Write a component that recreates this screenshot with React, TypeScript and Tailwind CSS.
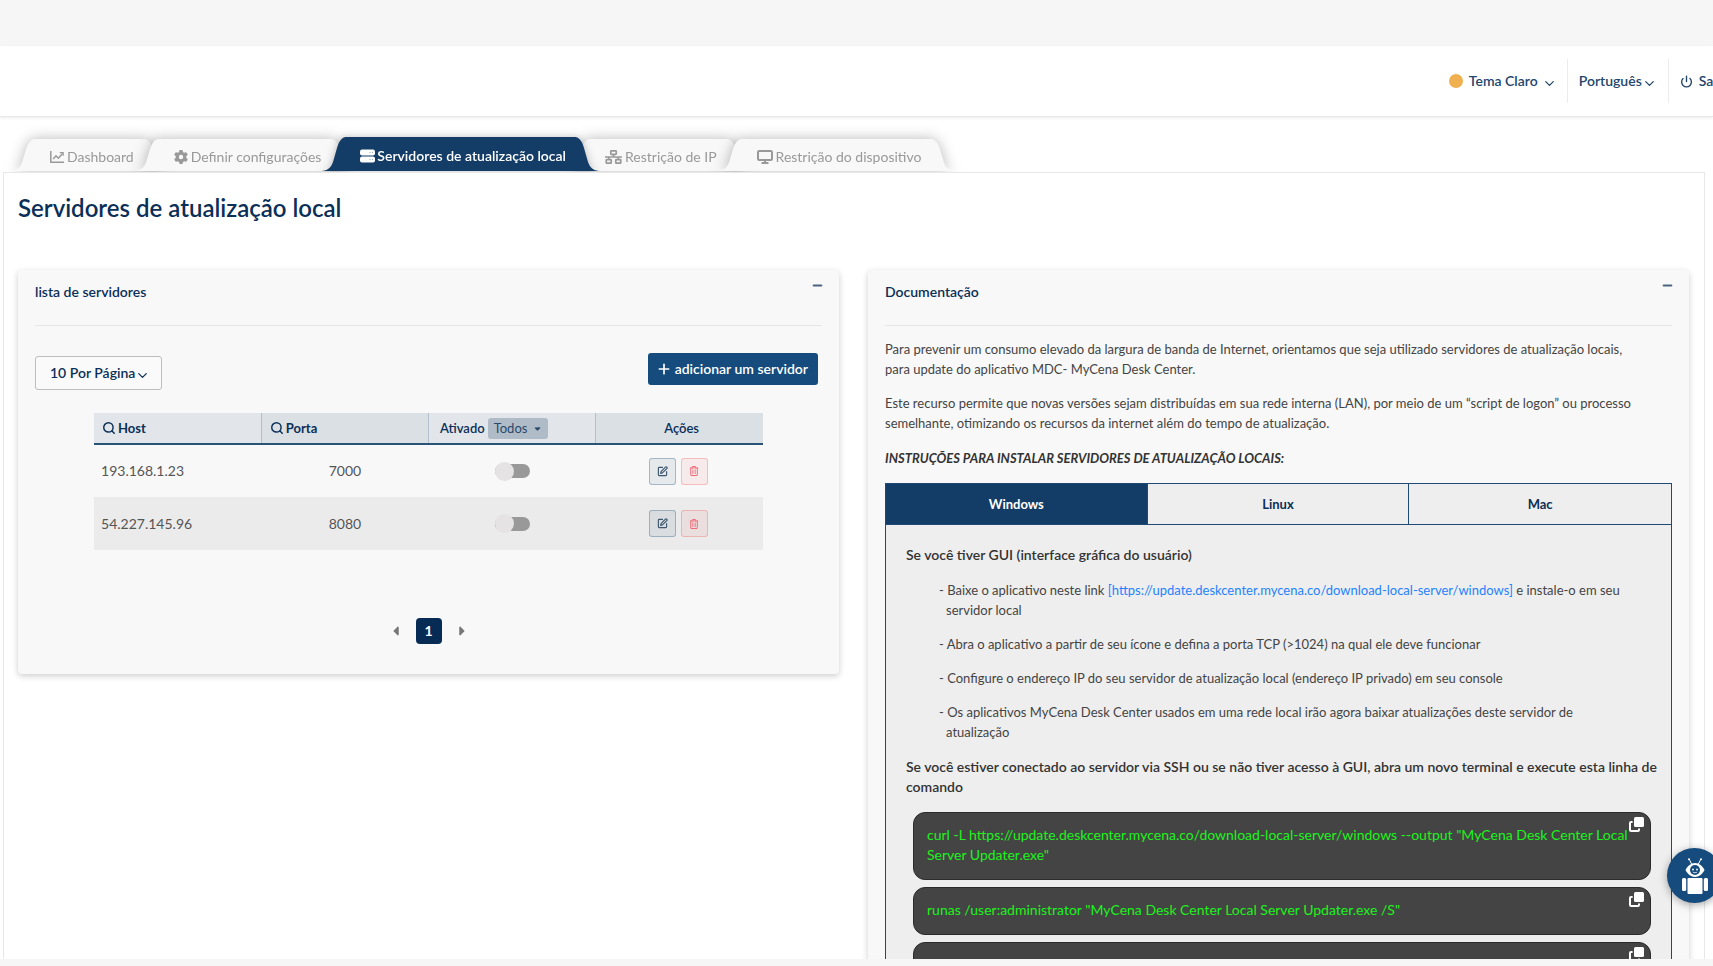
import type { ReactNode } from "react";
import { ChevronDown, Minus, Plus, Power, Search, SquarePen } from "lucide-react";
import { FaCaretDown, FaCaretLeft, FaCaretRight, FaGear, FaRegTrashCan } from "react-icons/fa6";

const servers = [
  { host: "193.168.1.23", port: "7000" },
  { host: "54.227.145.96", port: "8080" },
];

const commands = [
  'curl -L https://update.deskcenter.mycena.co/download-local-server/windows --output "MyCena Desk Center Local Server Updater.exe"',
  'runas /user:administrator "MyCena Desk Center Local Server Updater.exe /S"',
  'netstat -an | find "LISTENING"',
];

function ChartIcon() {
  return (
    <svg width="14" height="12" viewBox="0 0 14 12" fill="none" stroke="currentColor" strokeWidth="1.5">
      <path d="M.8 0v11.2H14" />
      <path d="M3.2 8 6 4.8l2.4 2.4 4.2-4.8" />
      <path d="M9.8 1.6h3.4v3.2" strokeWidth="1.2" />
    </svg>
  );
}

function ServerIcon() {
  return (
    <svg width="15" height="14" viewBox="0 0 15 14">
      <rect width="15" height="6" y="0.5" rx="2" fill="#fff" />
      <rect width="15" height="6" y="7.5" rx="2" fill="#fff" />
      <path d="M9.5 3.5h1M12 3.5h1M9.5 10.5h1M12 10.5h1" stroke="#8fa6bd" />
    </svg>
  );
}

function NetworkIcon() {
  return (
    <svg width="17" height="14" viewBox="0 0 17 14" fill="none" stroke="currentColor" strokeWidth="1.7">
      <rect x="5.75" y=".85" width="5.5" height="3.6" rx=".6" />
      <rect x="1.25" y="9.6" width="5" height="3.6" rx=".6" />
      <rect x="10.75" y="9.6" width="5" height="3.6" rx=".6" />
      <path d="M8.5 4.5V7M0 7h17M3.75 7v2.5M13.25 7v2.5" />
    </svg>
  );
}

function DisplayIcon() {
  return (
    <svg width="16" height="14" viewBox="0 0 16 14" fill="none" stroke="currentColor" strokeWidth="2">
      <rect x="1" y="1" width="14" height="9" rx="1.2" />
      <path d="M8 10v3M4.5 13h7" strokeWidth="2" />
    </svg>
  );
}

function CopyIcon() {
  return (
    <svg width="15" height="15" viewBox="0 0 15 15">
      <rect x="5" y="0" width="10" height="10" rx="1.5" fill="#fff" />
      <path d="M3.6 5H2a1 1 0 0 0-1 1v7a1 1 0 0 0 1 1h7a1 1 0 0 0 1-1v-1.6" fill="none" stroke="#fff" strokeWidth="2" />
    </svg>
  );
}

function RobotIcon() {
  return (
    <svg width="26" height="36" viewBox="0 0 26 36" fill="#fff">
      <path d="M7.2 1.2 9.6 6M18.8 1.2 16.4 6" stroke="#fff" strokeWidth="1" />
      <circle cx="7" cy="1.2" r="1" />
      <circle cx="19" cy="1.2" r="1" />
      <path d="M3.5 12C5.5 8 9 5 13 5s7.5 3 9.5 7c-2 4-5.5 7-9.5 7s-7.5-3-9.5-7Z" />
      <circle cx="13" cy="12" r="5" fill="#154c7d" />
      <circle cx="11" cy="11.5" r=".9" />
      <circle cx="15" cy="11.5" r=".9" />
      <path d="M10.8 14c1.3 1 3.1 1 4.400 0" fill="none" stroke="#fff" strokeWidth=".8" />
      <rect x="5.5" y="20" width="15" height="16" rx="1" />
      <rect x="0" y="20" width="4.2" height="13" rx="1.5" />
      <rect x="21.8" y="20" width="4.2" height="13" rx="1.5" />
    </svg>
  );
}

function TabCap({ flip }: { flip?: boolean }) {
  return (
    <svg width="24" height="34" viewBox="0 0 24 34" preserveAspectRatio="none" className={flip ? "h-full w-6 -scale-x-100" : "h-full w-6"}>
      <path d="M0 34C7 33 9 30 11 25L15 11C17 4 20 0 24 0v34Z" fill="currentColor" />
    </svg>
  );
}

type TabProps = { icon: ReactNode; label: string; active?: boolean };

function NavTab({ icon, label, active }: TabProps) {
  return (
    <button
      role="tab"
      aria-selected={!!active}
      className={
        active
          ? "relative z-10 -ml-[33px] flex h-[34px] text-[#133c66] drop-shadow-[0_0_4px_rgba(0,0,0,0.25)] first:ml-0"
          : "-ml-[33px] flex h-8 text-[#f8f8f8] drop-shadow-[0_0_7px_rgba(0,0,0,0.28)] first:ml-0"
      }
    >
      <TabCap />
      <span
        className={
          active
            ? "-mx-px flex h-full items-center gap-0.5 bg-[#133c66] pt-1 pr-2.5 pl-[15px] font-semibold whitespace-nowrap text-white"
            : "-mx-px flex h-full items-center gap-[3px] bg-[#f8f8f8] pt-[3px] pr-[11px] pl-4 whitespace-nowrap text-[#999]"
        }
      >
        {icon}
        {label}
      </span>
      <TabCap flip />
    </button>
  );
}

function Card({ title, children }: { title: string; children: ReactNode }) {
  return (
    <section className="rounded bg-[#f8f8f8] px-[17px] shadow-[0_2px_6px_rgba(0,0,0,0.2)]">
      <div className="flex h-14 justify-between border-b border-[#e6e6e6] pt-3">
        <h2 className="leading-5 font-semibold text-[#0b2f57]">{title}</h2>
        <button aria-label="Recolher" className="flex h-1.5 items-center text-[#4a647f]">
          <Minus size={13} strokeWidth={4} className="-mr-0.5" />
        </button>
      </div>
      {children}
    </section>
  );
}

function ServerTable() {
  return (
    <table className="mx-auto mt-[23px] w-[85%] table-fixed border-collapse">
      <thead>
        <tr className="h-[31px] border-b-2 border-[#2a5378] text-[13px] text-[#0b2f57]">
          <th className="border-r border-[#b3bfca] bg-[#e2e6ea] px-2 text-left font-bold">
            <span className="flex items-center gap-0.5">
              <Search size={14} strokeWidth={2.5} />
              Host
            </span>
          </th>
          <th className="border-r border-[#b3bfca] bg-[#dbe0e5] px-2 text-left font-bold">
            <span className="flex items-center gap-0.5">
              <Search size={14} strokeWidth={2.5} />
              Porta
            </span>
          </th>
          <th className="border-r border-[#b3bfca] bg-[#e2e6ea] px-[11px] text-left font-semibold">
            <span className="flex items-center gap-[3px]">
              Ativado
              <button className="flex h-[21px] items-center gap-1.5 rounded-[3px] bg-[#afbbc7] px-1.5 font-normal text-[#29486b]">
                Todos
                <FaCaretDown size={9} />
              </button>
            </span>
          </th>
          <th className="bg-[#dbe0e5] pl-1 font-semibold">Ações</th>
        </tr>
      </thead>
      <tbody className="text-[#555]">
        {servers.map((server) => (
          <tr key={server.host} className="h-[53px] even:bg-[#ebebeb]">
            <td className="px-[7px]">{server.host}</td>
            <td className="text-center">{server.port}</td>
            <td>
              <label className="mx-auto flex h-5 w-[35px] items-center">
                <input type="checkbox" role="switch" aria-label={`Ativar ${server.host}`} className="peer sr-only" />
                <span className="flex h-3.5 w-[35px] items-center rounded-full bg-[#999]">
                  <span className="size-[19px] rounded-full bg-[#e5e3e4]" />
                </span>
              </label>
            </td>
            <td>
              <div className="flex justify-center gap-[5px] pr-0.5">
                <button aria-label="Editar" className="flex size-[27px] items-center justify-center rounded-[3px] border border-[#12406a]/30 bg-[#12406a]/8 text-[#3e566e]">
                  <SquarePen size={11} strokeWidth={2.5} />
                </button>
                <button aria-label="Excluir" className="flex size-[27px] items-center justify-center rounded-[3px] border border-[#f05050]/30 bg-[#f05050]/8 text-[#ee6a78]">
                  <FaRegTrashCan size={10} />
                </button>
              </div>
            </td>
          </tr>
        ))}
      </tbody>
    </table>
  );
}

function Documentation() {
  return (
    <div className="pt-[13px] leading-5 text-[#444]">
      <p className="mb-[14px] text-[13px] leading-5">
        Para prevenir um consumo elevado da largura de banda de Internet, orientamos que seja utilizado servidores de atualização locais,
        <br />
        para update do aplicativo MDC- MyCena Desk Center.
      </p>
      <p className="mb-[15px] text-[13px] leading-5">
        Este recurso permite que novas versões sejam distribuídas em sua rede interna (LAN), por meio de um “script de logon” ou processo
        <br />
        semelhante, otimizando os recursos da internet além do tempo de atualização.
      </p>
      <p className="mb-[15px] text-[13px] leading-5 font-bold text-[#333] italic">INSTRUÇÕES PARA INSTALAR SERVIDORES DE ATUALIZAÇÃO LOCAIS:</p>
      <div className="border border-[#1f4a73] bg-[#eee]">
        <div role="tablist" className="grid h-[41px] grid-cols-3 divide-x divide-[#1f4a73] border-b border-[#1f4a73] text-[13px] font-bold text-[#0b2f57]">
          <button role="tab" aria-selected="true" className="bg-[#133c66] text-white">Windows</button>
          <button role="tab" aria-selected="false">Linux</button>
          <button role="tab" aria-selected="false">Mac</button>
        </div>
        <div className="pt-5 pr-1 pl-5">
          <p className="mb-[15px] font-semibold text-[#333]">Se você tiver GUI (interface gráfica do usuário)</p>
          <ul className="mb-[15px] space-y-[14px] pr-4 pl-10 -indent-[7px] text-[13px] leading-5">
            <li>
              - Baixe o aplicativo neste link{" "}
              <a href="#download" className="text-[#1f82ff]">[https://update.deskcenter.mycena.co/download-local-server/windows]</a> e instale-o em seu
              <br />
              servidor local
            </li>
            <li>- Abra o aplicativo a partir de seu ícone e defina a porta TCP (&gt;1024) na qual ele deve funcionar</li>
            <li>- Configure o endereço IP do seu servidor de atualização local (endereço IP privado) em seu console</li>
            <li>
              - Os aplicativos MyCena Desk Center usados em uma rede local irão agora baixar atualizações deste servidor de
              <br />
              atualização
            </li>
          </ul>
          <p className="mb-[15px] font-semibold text-[#333]">
            Se você estiver conectado ao servidor via SSH ou se não tiver acesso à GUI, abra um novo terminal e execute esta linha de comando
          </p>
          <div className="space-y-[7px] pr-4 pl-[7px]">
            {commands.map((command) => (
              <div key={command} className="relative rounded-xl border border-[#2b2b2b] bg-[#444] pt-3 pr-[18px] pb-3.5 pl-[13px] text-[#1cf31c]">
                {command}
                <button aria-label="Copiar" className="absolute top-1 right-1.5">
                  <CopyIcon />
                </button>
              </div>
            ))}
          </div>
        </div>
      </div>
    </div>
  );
}

export default function App() {
  return (
    <div className="flex h-screen flex-col overflow-hidden bg-white font-[Lato,sans-serif] text-sm">
      <div className="h-[46px] shrink-0 bg-[#f6f6f6]" />
      <header className="flex h-[71px] shrink-0 items-start justify-end overflow-hidden border-b border-[#e8e8e8] pt-[13px] font-semibold text-[#23466c] shadow-[0_1px_3px_rgba(0,0,0,0.08)]">
        <div className="-mr-[9px] flex h-11 divide-x divide-[#ececec]">
          <button className="flex items-center gap-1 pr-2.5">
            <span className="mr-0.5 size-3.5 rounded-full bg-[#f0b04f]" />
            Tema Claro
            <ChevronDown size={15} className="mt-1" />
          </button>
          <button className="flex items-center px-[11px]">
            Português
            <ChevronDown size={15} className="mt-1" />
          </button>
          <button className="flex items-center gap-1.5 pl-[11px]">
            <Power size={13} strokeWidth={2.5} />
            Sair
          </button>
        </div>
      </header>
      <main className="flex min-h-0 flex-1 flex-col overflow-hidden pt-5 pr-2 pl-[3px]">
        <div role="tablist" className="flex h-[35px] shrink-0 items-end pb-px pl-2">
          <NavTab icon={<ChartIcon />} label="Dashboard" />
          <NavTab icon={<FaGear size={14} />} label="Definir configurações" />
          <NavTab icon={<ServerIcon />} label="Servidores de atualização local" active />
          <NavTab icon={<NetworkIcon />} label="Restrição de IP" />
          <NavTab icon={<DisplayIcon />} label="Restrição do dispositivo" />
        </div>
        <div className="relative z-10 flex-1 border border-[#e8e8e8] bg-white pt-[19px] pr-[15px] pl-[14px]">
          <h1 className="mb-[46px] text-2xl leading-8 font-semibold text-[#0b2f57]">Servidores de atualização local</h1>
          <div className="grid grid-cols-2 items-start gap-[29px]">
            <Card title="lista de servidores">
              <div className="flex items-start justify-between pt-[27px] pr-1">
                <button className="mt-[3px] flex h-[34px] items-center rounded-[3px] border border-[#bdbdbd] bg-[#fafafa] pr-[11px] pl-3.5 font-semibold text-[#0b2f57]">
                  10 Por Página
                  <ChevronDown size={15} className="mt-1" />
                </button>
                <button className="flex h-8 items-center gap-[3px] rounded-[3px] bg-[#154c7d] pr-2.5 pl-2 font-semibold text-white">
                  <Plus size={16} strokeWidth={2.5} />
                  adicionar um servidor
                </button>
              </div>
              <ServerTable />
              <nav aria-label="Paginação" className="flex items-center justify-center gap-3 pt-[68px] pb-[30px] text-[#777]">
                <button aria-label="Anterior">
                  <FaCaretLeft size={14} />
                </button>
                <button aria-current="page" className="size-[26px] rounded bg-[#062b55] font-bold text-white">1</button>
                <button aria-label="Próxima">
                  <FaCaretRight size={14} />
                </button>
              </nav>
            </Card>
            <Card title="Documentação">
              <Documentation />
            </Card>
          </div>
        </div>
      </main>
      <div className="relative z-20 h-[7px] shrink-0 bg-[#f6f6f6]" />
      <button aria-label="Assistente" className="fixed -right-[9px] bottom-[63px] z-30 flex size-[55px] items-center justify-center rounded-full bg-[#154c7d] shadow-[0_2px_8px_rgba(0,0,0,0.35)]">
        <RobotIcon />
      </button>
    </div>
  );
}
